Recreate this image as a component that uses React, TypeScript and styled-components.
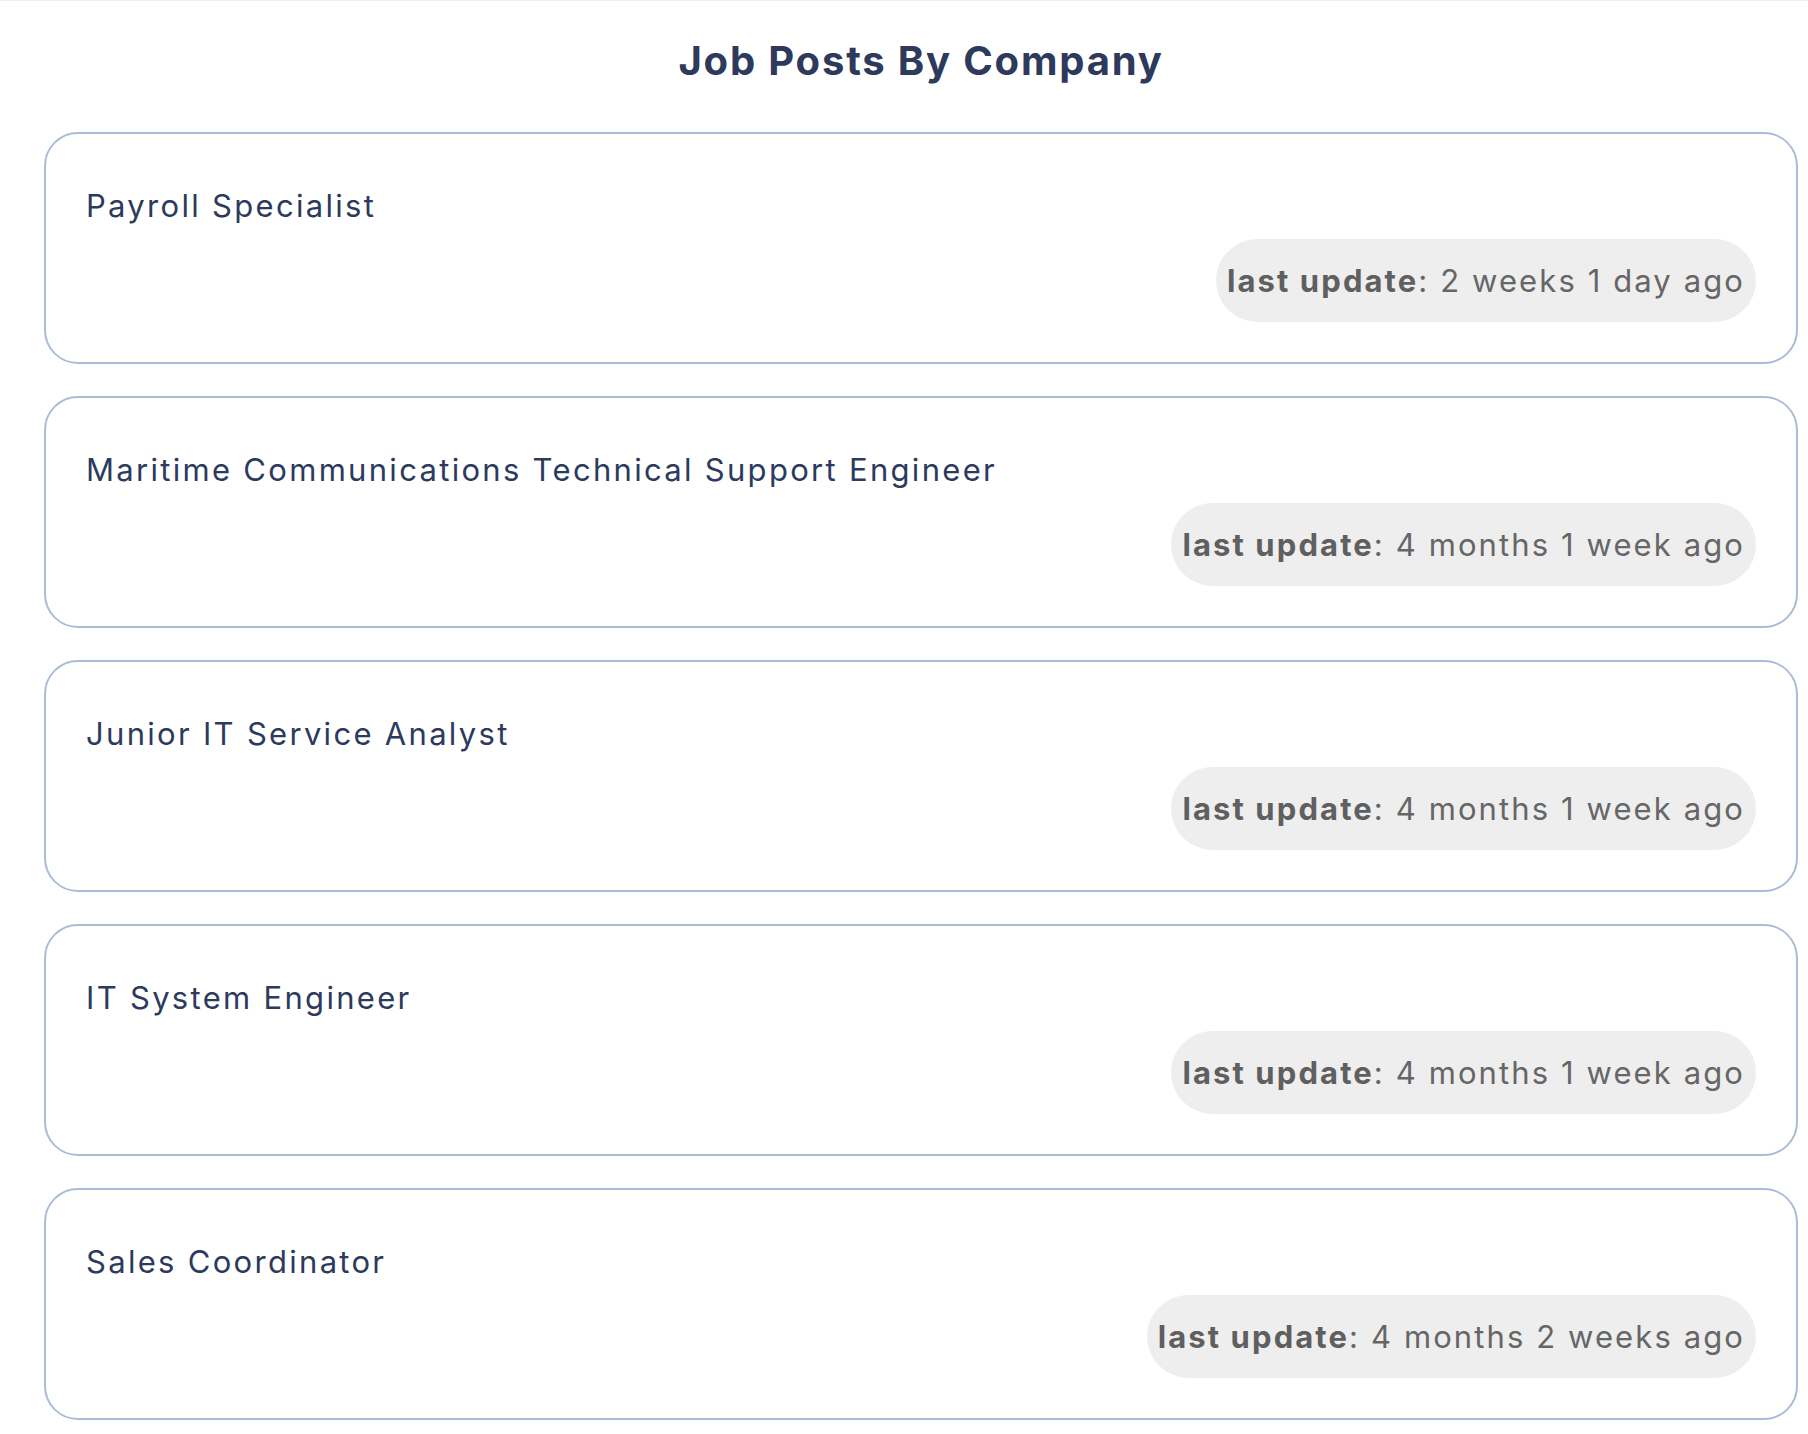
import React from 'react';
import styled, { createGlobalStyle } from 'styled-components';

interface JobPost {
    title: string;
    lastUpdate: string;
}

const jobPosts: JobPost[] = [
    { title: 'Payroll Specialist', lastUpdate: '2 weeks 1 day ago' },
    { title: 'Maritime Communications Technical Support Engineer', lastUpdate: '4 months 1 week ago' },
    { title: 'Junior IT Service Analyst', lastUpdate: '4 months 1 week ago' },
    { title: 'IT System Engineer', lastUpdate: '4 months 1 week ago' },
    { title: 'Sales Coordinator', lastUpdate: '4 months 2 weeks ago' },
];

const GlobalStyle = createGlobalStyle`
    body {
        margin: 0;
        background: #ffffff;
        font-family: Inter, "Noto Sans", sans-serif;
        border-top: 1px solid #f1f1f1;
    }
`;

const Page = styled.div`
    display: flex;
    flex-direction: column;
    padding: 32px 10px 14px 44px;
`;

const Title = styled.h1`
    margin: 0 0 43px 0;
    text-align: center;
    font-size: 40px;
    line-height: 56px;
    font-weight: 700;
    letter-spacing: 1.8px;
    color: #2e3a5c;
`;

const List = styled.div`
    display: flex;
    flex-direction: column;
    gap: 32px;
`;

const Card = styled.div`
    display: flex;
    flex-direction: column;
    padding: 40px;
    border: 2px solid #abbdd5;
    border-radius: 34px;
    background: #ffffff;
`;

const JobTitle = styled.div`
    padding-top: 9px;
    font-size: 31px;
    line-height: 45px;
    font-weight: 400;
    letter-spacing: 2.3px;
    color: #2c3a5e;
`;

const UpdateBadge = styled.div`
    align-self: flex-end;
    margin-top: 11px;
    padding: 19px 11px;
    border-radius: 42px;
    background: #eeeeee;
    font-size: 31px;
    line-height: 45px;
    letter-spacing: 2.1px;
    color: #666666;

    b {
        font-weight: 700;
        color: #5f5f5f;
    }
`;

const App: React.FC = () => {
    return (
        <>
            <GlobalStyle />
            <Page>
                <Title>Job Posts By Company</Title>
                <List>
                    {jobPosts.map((post, index) => (
                        <Card key={index}>
                            <JobTitle>{post.title}</JobTitle>
                            <UpdateBadge>
                                <b>last update</b>: {post.lastUpdate}
                            </UpdateBadge>
                        </Card>
                    ))}
                </List>
            </Page>
        </>
    );
};

export default App;
